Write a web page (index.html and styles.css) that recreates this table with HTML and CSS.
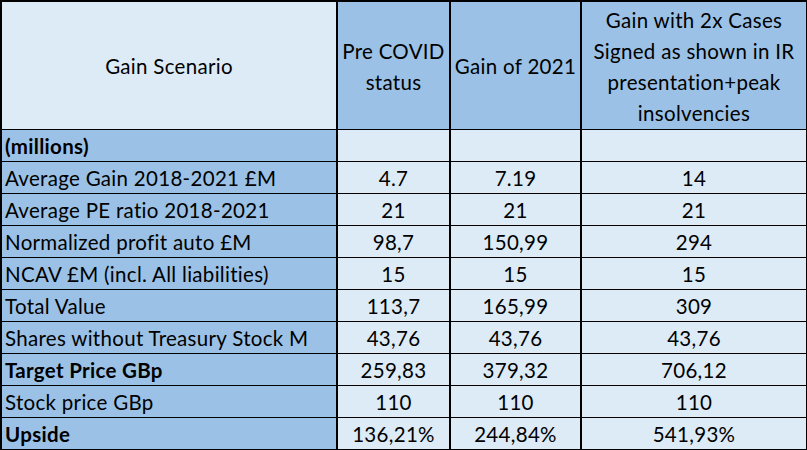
FILE: index.html
```html
<!DOCTYPE html>
<html>
<head>
<meta charset="utf-8">
<link rel="stylesheet" href="styles.css">
</head>
<body>
<table class="sheet">
  <colgroup>
    <col class="c1"><col class="c2"><col class="c3"><col class="c4">
  </colgroup>
  <tr class="head">
    <td class="label-head">Gain Scenario</td>
    <td class="col-head">Pre COVID<br>status</td>
    <td class="col-head">Gain of 2021</td>
    <td class="col-head">Gain with 2x Cases<br>Signed as shown in IR<br>presentation+peak<br>insolvencies</td>
  </tr>
  <tr><td class="label bold">(millions)</td><td class="val"></td><td class="val"></td><td class="val"></td></tr>
  <tr><td class="label">Average Gain 2018-2021 £M</td><td class="val">4.7</td><td class="val">7.19</td><td class="val">14</td></tr>
  <tr><td class="label">Average PE ratio 2018-2021</td><td class="val">21</td><td class="val">21</td><td class="val">21</td></tr>
  <tr><td class="label">Normalized profit auto £M</td><td class="val">98,7</td><td class="val">150,99</td><td class="val">294</td></tr>
  <tr><td class="label">NCAV £M (incl. All liabilities)</td><td class="val">15</td><td class="val">15</td><td class="val">15</td></tr>
  <tr><td class="label">Total Value</td><td class="val">113,7</td><td class="val">165,99</td><td class="val">309</td></tr>
  <tr><td class="label">Shares without Treasury Stock M</td><td class="val">43,76</td><td class="val">43,76</td><td class="val">43,76</td></tr>
  <tr><td class="label bold">Target Price GBp</td><td class="val">259,83</td><td class="val">379,32</td><td class="val">706,12</td></tr>
  <tr><td class="label">Stock price GBp</td><td class="val">110</td><td class="val">110</td><td class="val">110</td></tr>
  <tr><td class="label bold">Upside</td><td class="val">136,21%</td><td class="val">244,84%</td><td class="val">541,93%</td></tr>
</table>
</body>
</html>
```
FILE: styles.css
```css
html, body {
  margin: 0;
  padding: 0;
  background: #ffffff;
}
.sheet {
  border-collapse: collapse;
  table-layout: fixed;
  width: 806px;
  border: 2px solid #000;
  font-family: Lato, "Open Sans", sans-serif;
  font-size: 20.5px;
  letter-spacing: 0.3px;
  font-variant-ligatures: none;
  color: #000;
}
.c1 { width: 336px; }
.c2 { width: 113px; }
.c3 { width: 131px; }
.c4 { width: 226px; }
.sheet td {
  border-top: 1px solid #000;
  border-bottom: 1px solid #000;
  border-left: 2px solid #000;
  border-right: 2px solid #000;
  height: 30px;
  padding: 1px 3px 0;
  line-height: 30px;
  vertical-align: middle;
  white-space: nowrap;
}
.head td {
  height: 125px;
  text-align: center;
  line-height: 31px;
  padding: 2px 0 0;
}
.label-head { background: #ddebf7; }
.col-head { background: #9bc2e6; }
.label {
  background: #9bc2e6;
  text-align: left;
}
.bold { font-weight: 700; }
.val {
  background: #ddebf7;
  text-align: center;
}
```
